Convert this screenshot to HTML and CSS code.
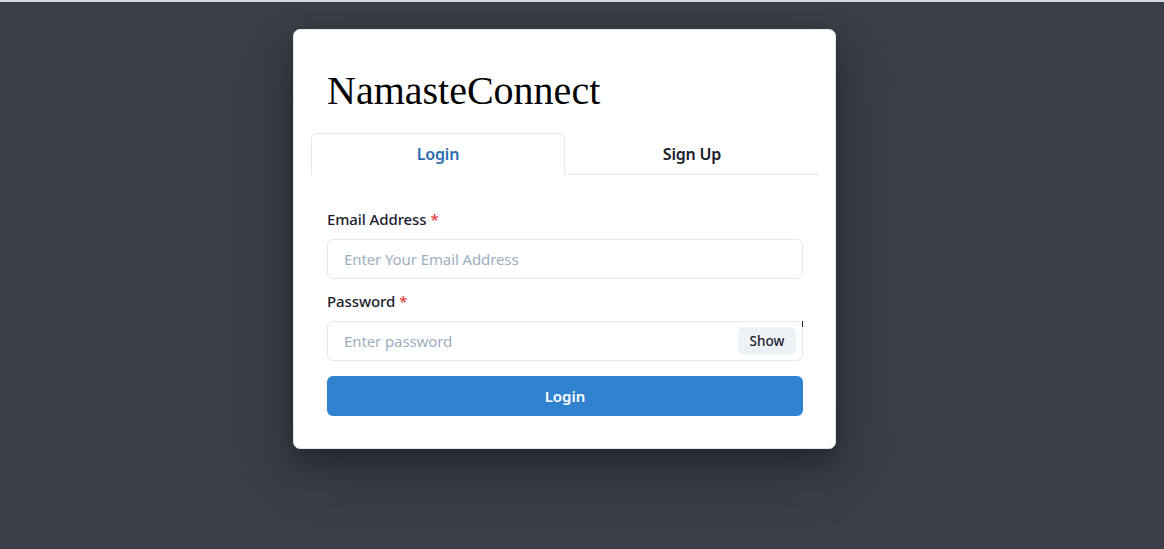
FILE: index.html
```html
<!DOCTYPE html>
<html lang="en">
<head>
<meta charset="utf-8">
<title>NamasteConnect</title>
<link rel="stylesheet" href="styles.css">
</head>
<body>
<div class="page">
  <div class="card">
    <div class="brand">
      <h1 class="brand-title">NamasteConnect</h1>
    </div>
    <div class="tabs">
      <div class="tablist">
        <button class="tab tab--active" type="button">Login</button>
        <button class="tab" type="button">Sign Up</button>
      </div>
      <form class="panel">
        <div class="field field--email">
          <label class="label" for="email">Email Address<span class="req">*</span></label>
          <input class="input" id="email" type="email" placeholder="Enter Your Email Address">
        </div>
        <div class="field field--password">
          <label class="label" for="password">Password<span class="req">*</span></label>
          <div class="input-group">
            <input class="input input--pw" id="password" type="password" placeholder="Enter password">
            <span class="mark"></span>
            <button class="show-btn" type="button">Show</button>
          </div>
        </div>
        <button class="submit" type="button">Login</button>
      </form>
    </div>
  </div>
</div>
</body>
</html>
```

FILE: styles.css
```css
* { box-sizing: border-box; }

html, body {
  margin: 0;
  height: 100%;
}

body {
  background: #3a3e48;
  border-top: 2px solid #d6d7d9;
  font-family: "Noto Sans", "Open Sans", sans-serif;
  color: #1a202c;
}

.page {
  padding: 27px 0 0 293px;
}

.card {
  width: 543px;
  background: #ffffff;
  border: 1px solid #e2e8f0;
  border-radius: 7px;
  padding: 16px 16px 16px 17px;
  box-shadow: 0 12px 28px rgba(0, 0, 0, 0.28), 0 24px 60px rgba(0, 0, 0, 0.18);
}

.brand {
  height: 87px;
  display: flex;
  align-items: center;
  padding: 0 16px;
}

.brand-title {
  margin: 0;
  font-family: "Liberation Serif", "Times New Roman", serif;
  font-weight: 400;
  font-size: 40px;
  line-height: 1;
  color: #000;
  padding-top: 2px;
}

.tablist {
  display: flex;
  border-bottom: 1px solid #e2e8f0;
}

.tab {
  flex: 1;
  height: 42px;
  margin-bottom: -1px;
  border: 1px solid transparent;
  border-radius: 6px 6px 0 0;
  background: transparent;
  font-family: inherit;
  font-size: 16px;
  font-weight: 600;
  color: #1a202c;
  padding: 0 16px;
  letter-spacing: -0.2px;
}

.tab--active {
  color: #2b6cb0;
  border-color: #e2e8f0;
  border-bottom-color: #ffffff;
  background: #fff;
}

.panel {
  display: flex;
  flex-direction: column;
  padding: 32px 16px 16px;
}

.field {
  display: flex;
  flex-direction: column;
}

.field--password {
  margin-top: 10px;
}

.label {
  font-size: 15px;
  font-weight: 500;
  line-height: 24px;
  margin-bottom: 8px;
  color: #1a202c;
  letter-spacing: -0.1px;
}

.req {
  color: #e53e3e;
  margin-left: 4px;
}

.input {
  width: 100%;
  height: 40px;
  border: 1px solid #e2e8f0;
  border-radius: 6px;
  padding: 0 16px;
  font-family: inherit;
  font-size: 15px;
  color: #1a202c;
  background: #fff;
  outline: none;
  letter-spacing: -0.1px;
}

.input::placeholder {
  color: #a0aec0;
}

.input-group {
  position: relative;
}

.input--pw {
  padding-right: 72px;
}

.mark {
  position: absolute;
  right: 0;
  top: 0;
  width: 1px;
  height: 6px;
  background: #1a202c;
}

.show-btn {
  position: absolute;
  right: 7px;
  top: 6px;
  height: 28px;
  width: 58px;
  border: 0;
  border-radius: 6px;
  background: #edf2f7;
  font-family: inherit;
  font-size: 13.5px;
  font-weight: 500;
  color: #1a202c;
  padding: 0;
}

.submit {
  margin-top: 15px;
  height: 40px;
  border: 0;
  border-radius: 6px;
  background: #3182ce;
  color: #ffffff;
  font-family: inherit;
  font-size: 15px;
  font-weight: 600;
}
```
